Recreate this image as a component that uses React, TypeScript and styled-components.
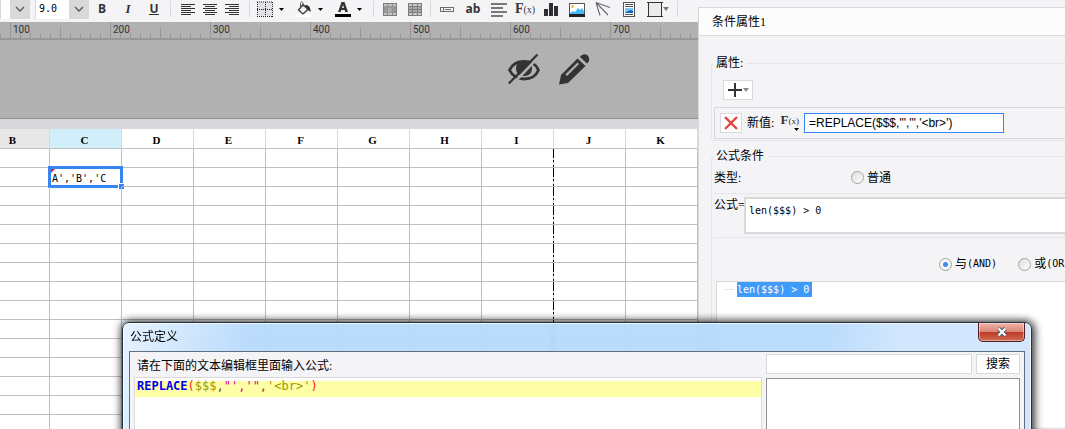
import React from "react";
import styled, { createGlobalStyle, css } from "styled-components";

const color = {
  chrome: "#f4f4f7",
  line: "#d9d9db",
  softLine: "#e6e6e9",
  canvas: "#b1b1b1",
  canvasLine: "#8f8f8f",
  cellLine: "#bfbfbf",
  accent: "#3685f2",
  ink: "#333334",
};

const serif = `"Liberation Serif", "Noto Sans CJK SC", serif`;
const mono = `"DejaVu Sans Mono", "Noto Sans CJK SC", monospace`;

const GlobalStyle = createGlobalStyle`
  *, *::before, *::after { box-sizing: border-box; }
  body {
    margin: 0;
    overflow: hidden;
    background: ${color.chrome};
    color: #000;
    font: 12px/16px ${serif};
  }
  button, input, select, textarea { font: inherit; color: inherit; margin: 0; padding: 0; border-radius: 0; outline: none; }
`;

const Page = styled.div`
  position: relative;
  display: grid;
  grid-template-columns: minmax(0, 1fr) 367px;
  height: 100vh;
  overflow: hidden;
`;

const Workspace = styled.main`
  display: flex;
  flex-direction: column;
  min-width: 0;
  overflow: hidden;
`;

/* Toolbar */

const Toolbar = styled.div`
  flex: none;
  display: flex;
  align-items: center;
  height: 22px;
  padding-bottom: 4px;
`;

const Combo = styled.label<{ $field: number }>`
  position: relative;
  flex: none;
  display: flex;
  height: 20px;
  background: linear-gradient(to right, #fff ${(p) => p.$field}px, ${color.line} ${(p) => p.$field}px);

  & + & { margin-left: 5px; }

  select {
    appearance: none;
    width: ${(p) => p.$field + 20}px;
    padding-left: 3px;
    border: 0;
    border-left: 1px solid ${color.line};
    background: transparent;
    font: 10px/18px ${mono};
  }
  svg {
    position: absolute;
    right: 5px;
    top: 7px;
    pointer-events: none;
  }
`;

const Tool = styled.button<{ $width?: number }>`
  flex: none;
  display: flex;
  align-items: center;
  justify-content: center;
  width: ${(p) => p.$width ?? 26}px;
  height: 18px;
  border: 0;
  background: transparent;
  color: ${color.ink};
`;

const Letter = styled.span<{ $kind: "bold" | "italic" | "underline" | "ab" }>`
  font: bold 12px/14px "Open Sans", sans-serif;
  ${(p) => p.$kind === "italic" && css`font: italic bold 13px/14px "Liberation Serif", serif;`}
  ${(p) => p.$kind === "underline" && css`border-bottom: 1px solid ${color.ink}; line-height: 11px;`}
`;

const Separator = styled.span`
  flex: none;
  width: 1px;
  height: 16px;
  margin: 0 3px;
  background: ${color.line};
`;

const Cluster = styled.div`
  flex: none;
  display: flex;
  padding: 0 3px;
`;

const Pair = styled.div`
  flex: none;
  display: flex;
  margin-right: 7px;
`;

const Fx = styled.span`
  font: bold 14px/16px "Liberation Serif", serif;
  color: ${color.ink};
  white-space: nowrap;
  small { font-size: 10px; font-weight: normal; }
`;

/* Ruler and canvas */

const Ruler = styled.div`
  flex: none;
  display: flex;
  height: 18px;
  padding-left: 10px;
  overflow: hidden;
  border-bottom: 2px solid #979797;
  background-color: ${color.canvas};
  background-image: linear-gradient(to right, #979797 1px, transparent 1px),
    linear-gradient(to right, #979797 1px, transparent 1px),
    linear-gradient(to right, #979797 1px, transparent 1px);
  background-size: 100px 16px, 100px 11px, 10px 5px;
  background-position: 10px 0, 60px 5px, 0 11px;
  background-repeat: repeat-x;
`;

const RulerMark = styled.span`
  flex: none;
  width: 100px;
  padding-left: 3px;
  font: 10px/16px Roboto, sans-serif;
  color: ${color.ink};
`;

const Canvas = styled.div`
  flex: none;
  display: flex;
  justify-content: flex-end;
  align-items: center;
  gap: 18px;
  height: 79px;
  padding: 0 108px 20px 0;
  border-bottom: 1px solid ${color.canvasLine};
  background: ${color.canvas};
`;

const CanvasAction = styled.button`
  display: flex;
  padding: 0;
  border: 0;
  background: transparent;
`;

/* Sheet */

const SheetArea = styled.div`
  flex: 1;
  min-height: 0;
  padding-top: 10px;
  overflow: hidden;
  background: linear-gradient(${color.line} 10px, #fff 10px);
`;

const Sheet = styled.table`
  table-layout: fixed;
  width: 698px;
  border-collapse: separate;
  border-spacing: 0;
`;

const Col = styled.col<{ $width: number }>`
  width: ${(p) => p.$width}px;
`;

const ColumnHead = styled.th<{ $state?: "dim" | "active" }>`
  height: 20px;
  padding: 3px 2px 0 0;
  border-right: 1px solid ${color.line};
  border-bottom: 1px solid ${color.cellLine};
  background: ${(p) => (p.$state === "active" ? "#d0effb" : p.$state === "dim" ? "#e8e8e8" : "#fff")};
  font: bold 11px/16px ${serif};
  ${(p) => p.$state === "dim" && css`padding-right: 24px;`}
`;

const Cell = styled.td<{ $pageBreak?: boolean }>`
  position: relative;
  height: 19px;
  padding: 4px 0 0 2px;
  border-right: 1px solid ${color.cellLine};
  border-bottom: 1px solid ${color.cellLine};
  font: 10px/14px ${mono};
  vertical-align: bottom;
  white-space: nowrap;
  ${(p) =>
    p.$pageBreak &&
    css`
      border-right: 0;
      background: linear-gradient(#000 0 9px, #ccc 9px 11px, #000 11px 13px, #ccc 13px 16px, #000 16px) right / 1px 100% no-repeat;
    `}
`;

const Selection = styled.span`
  position: absolute;
  inset: -2px;
  border: 3px solid ${color.accent};
  pointer-events: none;

  &::before {
    content: "";
    position: absolute;
    left: 0;
    top: 0;
    border: 2px solid transparent;
    border-left-color: #f0144c;
    border-top-color: #f0144c;
  }
  &::after {
    content: "";
    position: absolute;
    right: -4px;
    bottom: -4px;
    width: 6px;
    height: 6px;
    border: solid #fff;
    border-width: 1px 0 0 1px;
    background: ${color.accent};
  }
`;

/* Condition panel */

const Panel = styled.aside`
  display: flex;
  flex-direction: column;
  min-width: 0;
  margin-top: 7px;
  overflow: hidden;
  border: solid ${color.line};
  border-width: 1px 0 0 1px;
  background: ${color.chrome};
  white-space: nowrap;
`;

const PanelTitle = styled.h2`
  flex: none;
  margin: 0;
  padding: 6px 13px 5px;
  border-bottom: 1px solid ${color.line};
  background: #fcfcfd;
  font: 12px/16px ${serif};
`;

const PanelBody = styled.div`
  flex: 1;
  display: flex;
  flex-direction: column;
  gap: 7px;
  min-height: 0;
  padding: 19px 0 0 12px;
`;

const Group = styled.fieldset<{ $fill?: boolean }>`
  display: flex;
  flex-direction: column;
  flex: ${(p) => (p.$fill ? "1" : "none")};
  min-width: 0;
  margin: 0;
  padding: 0 0 1px 2px;
  border: 1px solid ${color.softLine};
  border-right: 0;
  border-radius: 4px 0 0 4px;

  legend { padding: 0 4px 0 2px; line-height: 16px; }
`;

const IconButton = styled.button<{ $width: number }>`
  flex: none;
  display: flex;
  align-items: center;
  justify-content: center;
  gap: 1px;
  width: ${(p) => p.$width}px;
  height: 20px;
  border: 1px solid ${color.line};
  background: #fff;
`;

const AddRow = styled.div`
  padding: 9px 0 7px 9px;
`;

const ValueRow = styled.div`
  display: flex;
  align-items: center;
  gap: 5px;
  height: 32px;
  padding-left: 5px;
  border: 1px solid ${color.line};
  border-right: 0;

  label { width: 30px; }
`;

const FxButton = styled.button`
  display: flex;
  flex-direction: column;
  align-items: flex-end;
  width: 17px;
  height: 20px;
  border: 0;
  background: transparent;

  span { font-size: 13px; line-height: 14px; }
  small { font-size: 9px; }
`;

const ValueInput = styled.input`
  width: 200px;
  height: 20px;
  padding: 0 4px;
  border: 1px solid ${color.accent};
  background: #fff;
  font: 12px/18px "Liberation Sans", sans-serif;
`;

const TypeRow = styled.div`
  display: flex;
  align-items: center;
  height: 30px;
  padding-bottom: 2px;
  border-bottom: 1px solid ${color.softLine};
`;

const RowLabel = styled.span`
  width: 137px;
`;

const RadioLabel = styled.label`
  display: flex;
  align-items: center;

  input {
    appearance: none;
    width: 13px;
    height: 13px;
    margin-right: 3px;
    border: 1px solid #a3a3a3;
    border-radius: 50%;
    background: linear-gradient(135deg, #dcdcdc, #fff);
  }
  input:checked {
    background: radial-gradient(circle, #3d8bf4 0 2px, #f4f4f6 3px);
  }
`;

const Operator = styled.span`
  font: 10px/16px ${mono};
`;

const FormulaRow = styled.div`
  display: flex;
  height: 44px;
  padding: 3px 0;
  border-bottom: 1px solid ${color.softLine};

  label { width: 30px; }
`;

const FormulaText = styled.textarea`
  flex: 1;
  resize: none;
  overflow: hidden;
  padding: 4px 3px;
  border: 2px solid ${color.line};
  border-right: 0;
  background: #fff;
  font: 10px/16px ${mono};
`;

const JoinRow = styled.div`
  display: flex;
  gap: 21px;
  padding: 18px 0 9px 225px;
`;

const ConditionList = styled.ul`
  flex: 1;
  margin: 0 0 0 2px;
  padding: 0 0 0 7px;
  border: solid ${color.line};
  border-width: 1px 0 0 1px;
  background: #fff;
  list-style: none;
`;

const Condition = styled.li`
  display: flex;
  align-items: center;

  &::before {
    content: "";
    width: 10px;
    height: 1px;
    margin-right: 3px;
    background: ${color.softLine};
  }
  span {
    padding-right: 3px;
    background: #3f9bfa;
    color: #fff;
    font: 10px/15px ${mono};
  }
`;

/* Formula dialog */

const Dialog = styled.section`
  position: absolute;
  left: 122px;
  right: 33px;
  top: 322px;
  bottom: -20px;
  display: flex;
  flex-direction: column;
  padding: 0 6px;
  border: 1px solid #26323d;
  border-radius: 7px;
  background: linear-gradient(100deg, rgba(228, 241, 255, 0.95), rgba(176, 214, 252, 0.86) 14%, rgba(176, 214, 252, 0.86) 76%, rgba(208, 230, 254, 0.96) 84%);
  box-shadow: inset 0 0 0 1px rgba(255, 255, 255, 0.7), 0 0 9px 1px rgba(0, 0, 0, 0.7), 3px 0 10px rgba(0, 0, 0, 0.4);
  backdrop-filter: blur(2px);
`;

const TitleBar = styled.header`
  display: flex;
  justify-content: space-between;
  align-items: flex-start;
  height: 28px;

  h2 {
    margin: 0;
    padding: 5px 1px;
    font: 12px/18px ${serif};
  }
`;

const CloseButton = styled.button`
  display: flex;
  align-items: center;
  justify-content: center;
  width: 47px;
  height: 19px;
  border: 1px solid #4f1d22;
  border-top: 0;
  border-radius: 0 0 5px 5px;
  background: linear-gradient(#efb3a6, #dc8677 48%, #bd3a24 50%, #cf6a50);
  box-shadow: inset 0 0 0 1px rgba(255, 255, 255, 0.45);
`;

const DialogBody = styled.div`
  flex: 1;
  display: flex;
  gap: 4px;
  padding: 2px 4px 0;
  border: 1px solid #5f6f82;
  background: ${color.chrome};
`;

const EditorColumn = styled.div`
  flex: 1;
  display: flex;
  flex-direction: column;
  min-width: 0;
`;

const Prompt = styled.span`
  padding: 4px 3px 3px;
`;

const Editor = styled.div`
  flex: 1;
  padding-top: 3px;
  border: 1px solid ${color.line};
  background: #fff;
`;

const CodeLine = styled.div`
  height: 16px;
  padding-left: 2px;
  background: #ffffa8;
  font: 12px/10px ${mono};
  outline: none;
  white-space: pre;
`;

const Token = styled.span<{ $kind: "name" | "paren" | "value" | "comma" | "string" }>`
  color: ${(p) =>
    ({ name: "#0000f0", paren: "#ff2020", value: "#999900", comma: "#804040", string: "#dc009c" })[p.$kind]};
  ${(p) => p.$kind === "name" && css`font-weight: bold;`}
`;

const SearchColumn = styled.div`
  flex: none;
  display: flex;
  flex-direction: column;
  gap: 4px;
  width: 254px;
`;

const SearchRow = styled.div`
  display: flex;
  gap: 4px;
`;

const SearchInput = styled.input`
  flex: 1;
  min-width: 0;
  height: 20px;
  border: 1px solid ${color.line};
  background: #fff;
`;

const SearchButton = styled.button`
  width: 44px;
  height: 20px;
  border: 1px solid ${color.line};
  background: #fff;
`;

const Results = styled.div`
  flex: 1;
  border: 1px solid #929294;
  background: #fff;
`;

/* Drawings */

const Chevron = () => (
  <svg width="10" height="7" viewBox="0 0 10 7" fill="none" stroke="#555" strokeWidth="1.3">
    <path d="M1 1l4 4 4-4" />
  </svg>
);

const Caret = ({ fill = "#000", size = 5 }: { fill?: string; size?: number }) => (
  <svg width={size} height={size === 5 ? 3 : 4} viewBox="0 0 5 3" preserveAspectRatio="none">
    <path d="M0 0h5L2.500 3z" fill={fill} />
  </svg>
);

const Icon = ({ children, w = 16 }: { children: React.ReactNode; w?: number }) => (
  <svg width={w} height="16" viewBox={`0 0 ${w} 16`} fill="none">
    {children}
  </svg>
);

const alignInset = { left: 0, center: 2, right: 4 };

const AlignIcon = ({ kind }: { kind: keyof typeof alignInset }) => (
  <Icon w={14}>
    <g fill={color.ink}>
      {[3, 5, 7, 9, 11, 13].map((y, i) => (
        <rect key={y} x={i % 2 ? alignInset[kind] : 0} y={y} width={i % 2 ? 10 : 14} height="1" />
      ))}
    </g>
  </Icon>
);

const BorderIcon = () => (
  <Icon>
    <rect x="1" y="1" width="14" height="14" fill="#e2e2e4" />
    <path d="M.5 1v15M8.500 1v15M15.500 1v15M0 1h16M0 8.500h16M0 15.500h16" stroke="#222" strokeDasharray="1 1" />
  </Icon>
);

const BucketIcon = () => (
  <Icon w={18}>
    <rect x="0" y="13" width="16" height="3" fill="#fff" />
    <path d="M8 3.500l5 5-5 4.500L3.500 9z" fill="#f0f0f0" stroke={color.ink} strokeWidth="1.300" />
    <path d="M5.500 7V2.500C5.500.5 8 .5 8 2.500V6" stroke="#555" />
    <path d="M10 4c3-.5 6 2 5.500 7l-2.500-2z" fill={color.ink} />
  </Icon>
);

const FontColorIcon = () => (
  <Icon>
    <path d="M3 11L6.500 1h3L13 11h-2.700l-.6-2H6.300l-.6 2zM7 7h2L8 3.700z" fill={color.ink} fillRule="evenodd" />
    <rect y="13" width="16" height="3" fill="#000" />
  </Icon>
);

const MergeIcon = () => (
  <Icon w={14}>
    <rect x=".5" y="2.500" width="13" height="12" fill="#c4c4c4" stroke="#7d7d7d" />
    <rect x="1" y="5" width="12" height="7" fill="#979797" />
    <path d="M4.500 3v2M9.500 3v2M4.500 12v2M9.500 12v2" stroke="#8a8a8a" />
    <path d="M5 7.500h3v3H5.500V9H8" stroke="#b4b4b4" />
  </Icon>
);

const SplitIcon = () => (
  <Icon w={14}>
    <rect x=".5" y="2.500" width="13" height="12" fill="#c9c9c9" stroke="#7d7d7d" />
    <rect x="1" y="6" width="12" height="5" fill="#a8a8a8" />
    <path d="M4.500 2v12M9.500 2v12M0 5.500h14M0 8.500h14M0 11.500h14" stroke="#7d7d7d" />
  </Icon>
);

const FieldIcon = () => (
  <Icon w={14}>
    <rect x=".5" y="6.500" width="13" height="4" stroke="#6c6c6c" />
    <path d="M3.500 7v3M5 8.500h6" stroke="#6c6c6c" />
  </Icon>
);

const LinesIcon = () => (
  <Icon>
    <path d="M0 3h16M0 7h12M0 11h16M0 15h12" stroke="#505052" strokeWidth="1.500" />
  </Icon>
);

const ChartIcon = () => (
  <Icon w={14}>
    <path d="M0 8h4v7H0zM5 2h4v13H5zM10 5h4v10h-4z" fill="#2f2f31" />
  </Icon>
);

const ImageIcon = () => (
  <Icon>
    <rect x=".5" y="2.500" width="15" height="13" fill="#fff" stroke="#555" />
    <circle cx="3.500" cy="5.500" r="1.500" fill="#f7bd48" />
    <path d="M1 12l3-2 2 1 3-4 2 2 2-2 2 3v3H1z" fill="#44b9f4" />
    <path d="M0 14.500h16" stroke="#222" strokeWidth="3" />
  </Icon>
);

const SlashIcon = () => (
  <Icon>
    <path d="M1 1.500l14 5M1 1.500L13 14M1 1.500l4 13" stroke="#68686a" strokeWidth="1.100" />
  </Icon>
);

const ReportIcon = () => (
  <Icon w={12}>
    <rect x=".5" y="1.500" width="11" height="14" fill="#fff" stroke="#555" />
    <path d="M2 3.500h8M2 5.500h8M2 13.500h8" stroke="#555" />
    <rect x="2" y="7" width="8" height="5" fill="#7fc4f4" />
    <path d="M2 12l3-2 3-1 2 1v2z" fill="#1464b4" />
  </Icon>
);

const FrameIcon = () => (
  <Icon>
    <rect x="1.500" y="1.500" width="13" height="14" fill="#ebebee" stroke="#333" />
    <path d="M0 1.500h16M0 15.500h16" stroke="#333" />
  </Icon>
);

const EyeOffIcon = () => (
  <svg width="33" height="31" viewBox="0 0 33 31" fill="none">
    <path d="M1.500 16C7 4.500 26 4.500 30.500 16 26 28 7 28 1.500 16z" stroke={color.ink} strokeWidth="2.800" />
    <path d="M8 14.500c0-4.500 3-7 8-7s8 2.500 8 7-3 7.500-8 7.500-8-3-8-7.500z" fill={color.ink} />
    <path d="M32.500 1L4 31" stroke={color.canvas} strokeWidth="2.600" />
    <path d="M29.500 .5L.8 29.500" stroke={color.ink} strokeWidth="2.200" />
  </svg>
);

const PencilIcon = () => (
  <svg width="31" height="31" viewBox="0 0 31 31" fill={color.ink}>
    <path d="M21 3c2.500-4 8-3.500 9 1 .8 2.500-.5 4.500-2 5.500z" />
    <path d="M18.500 4.500l8 7.500L9 29 0 30.500 2 21z" />
    <path d="M18.500 8.500l1.500 1.500L8 22l-1.700-1.400z" fill={color.canvas} />
  </svg>
);

const FxGlyph = () => (
  <Fx>
    F<small>(x)</small>
  </Fx>
);

const columns = ["B", "C", "D", "E", "F", "G", "H", "I", "J", "K"];
const rows = Array.from({ length: 15 }, (_, i) => i + 1);
const marks = [100, 200, 300, 400, 500, 600, 700];

export default function App() {
  return (
    <Page>
      <GlobalStyle />
      <Workspace>
        <Toolbar role="toolbar" aria-label="Format">
          <Combo $field={10}>
            <select aria-label="Font family" />
            <Chevron />
          </Combo>
          <Combo $field={34}>
            <select aria-label="Font size" defaultValue="9.0">
              <option>9.0</option>
            </select>
            <Chevron />
          </Combo>
          <Tool aria-label="Bold"><Letter $kind="bold">B</Letter></Tool>
          <Tool aria-label="Italic"><Letter $kind="italic">I</Letter></Tool>
          <Tool aria-label="Underline"><Letter $kind="underline">U</Letter></Tool>
          <Separator />
          <Cluster>
            <Tool $width={22} aria-label="Align left"><AlignIcon kind="left" /></Tool>
            <Tool $width={22} aria-label="Align center"><AlignIcon kind="center" /></Tool>
            <Tool $width={22} aria-label="Align right"><AlignIcon kind="right" /></Tool>
          </Cluster>
          <Separator />
          <Pair>
            <Tool $width={24} aria-label="Borders"><BorderIcon /></Tool>
            <Tool $width={8} aria-label="Border options"><Caret /></Tool>
          </Pair>
          <Pair>
            <Tool $width={24} aria-label="Fill"><BucketIcon /></Tool>
            <Tool $width={8} aria-label="Fill options"><Caret /></Tool>
          </Pair>
          <Pair>
            <Tool $width={24} aria-label="Font color"><FontColorIcon /></Tool>
            <Tool $width={8} aria-label="Font color options"><Caret /></Tool>
          </Pair>
          <Separator />
          <Tool $width={25} aria-label="Merge"><MergeIcon /></Tool>
          <Tool $width={25} aria-label="Split"><SplitIcon /></Tool>
          <Separator />
          <Tool aria-label="Field"><FieldIcon /></Tool>
          <Tool aria-label="Text"><Letter $kind="ab">ab</Letter></Tool>
          <Tool aria-label="Rich text"><LinesIcon /></Tool>
          <Tool aria-label="Formula"><FxGlyph /></Tool>
          <Tool aria-label="Chart"><ChartIcon /></Tool>
          <Tool aria-label="Image"><ImageIcon /></Tool>
          <Tool aria-label="Slash header"><SlashIcon /></Tool>
          <Tool aria-label="Subreport"><ReportIcon /></Tool>
          <Tool $width={32} aria-label="Float">
            <FrameIcon />
            <Caret fill="#777" size={6} />
          </Tool>
          <Separator />
        </Toolbar>
        <Ruler>
          {marks.map((m) => (
            <RulerMark key={m}>{m}</RulerMark>
          ))}
        </Ruler>
        <Canvas>
          <CanvasAction aria-label="Hide"><EyeOffIcon /></CanvasAction>
          <CanvasAction aria-label="Edit"><PencilIcon /></CanvasAction>
        </Canvas>
        <SheetArea>
          <Sheet>
            <colgroup>
              {columns.map((c) => (
                <Col key={c} $width={c === "B" ? 50 : 72} />
              ))}
            </colgroup>
            <thead>
              <tr>
                {columns.map((c) => (
                  <ColumnHead key={c} $state={c === "B" ? "dim" : c === "C" ? "active" : undefined}>
                    {c}
                  </ColumnHead>
                ))}
              </tr>
            </thead>
            <tbody>
              {rows.map((r) => (
                <tr key={r}>
                  {columns.map((c) => (
                    <Cell key={c} $pageBreak={c === "I"}>
                      {r === 2 && c === "C" && (
                        <>
                          A','B','C
                          <Selection />
                        </>
                      )}
                    </Cell>
                  ))}
                </tr>
              ))}
            </tbody>
          </Sheet>
        </SheetArea>
      </Workspace>

      <Panel>
        <PanelTitle>条件属性1</PanelTitle>
        <PanelBody>
          <Group>
            <legend>属性:</legend>
            <AddRow>
              <IconButton $width={30} aria-label="Add">
                <svg width="14" height="14" viewBox="0 0 14 14" stroke={color.ink} strokeWidth="2">
                  <path d="M7 0v14M0 7h14" />
                </svg>
                <Caret fill="#888" size={6} />
              </IconButton>
            </AddRow>
            <ValueRow>
              <IconButton $width={22} aria-label="Delete">
                <svg width="14" height="14" viewBox="0 0 14 14" stroke="#e8403c" strokeWidth="2.400">
                  <path d="M1 1l12 12M13 1L1 13" />
                </svg>
              </IconButton>
              <label htmlFor="new-value">新值:</label>
              <FxButton aria-label="Value type">
                <FxGlyph />
                <Caret />
              </FxButton>
              <ValueInput id="new-value" defaultValue={`=REPLACE($$$,"','",'<br>')`} />
            </ValueRow>
          </Group>
          <Group $fill>
            <legend>公式条件</legend>
            <TypeRow>
              <RowLabel>类型:</RowLabel>
              <RadioLabel>
                <input type="radio" name="type" />
                普通
              </RadioLabel>
            </TypeRow>
            <FormulaRow>
              <label htmlFor="condition">公式=</label>
              <FormulaText id="condition" defaultValue="len($$$) > 0" />
            </FormulaRow>
            <JoinRow>
              <RadioLabel>
                <input type="radio" name="join" defaultChecked />
                与<Operator>(AND)</Operator>
              </RadioLabel>
              <RadioLabel>
                <input type="radio" name="join" />
                或<Operator>(OR)</Operator>
              </RadioLabel>
            </JoinRow>
            <ConditionList>
              <Condition>
                <span>len($$$) &gt; 0</span>
              </Condition>
            </ConditionList>
          </Group>
        </PanelBody>
      </Panel>

      <Dialog role="dialog" aria-labelledby="dialog-title">
        <TitleBar>
          <h2 id="dialog-title">公式定义</h2>
          <CloseButton aria-label="Close">
            <svg width="12" height="10" viewBox="0 0 12 10" fill="none">
              <path d="M2.500 1.500l7 7M9.500 1.500l-7 7" stroke="#4c5563" strokeWidth="4.200" />
              <path d="M2.500 1.500l7 7M9.500 1.500l-7 7" stroke="#f4f4f4" strokeWidth="2.400" />
            </svg>
          </CloseButton>
        </TitleBar>
        <DialogBody>
          <EditorColumn>
            <Prompt id="prompt">请在下面的文本编辑框里面输入公式:</Prompt>
            <Editor>
              <CodeLine role="textbox" aria-labelledby="prompt" contentEditable suppressContentEditableWarning>
                <Token $kind="name">REPLACE</Token>
                <Token $kind="paren">(</Token>
                <Token $kind="value">$$$</Token>
                <Token $kind="comma">,</Token>
                <Token $kind="string">"','"</Token>
                <Token $kind="comma">,</Token>
                <Token $kind="value">'&lt;br&gt;'</Token>
                <Token $kind="paren">)</Token>
              </CodeLine>
            </Editor>
          </EditorColumn>
          <SearchColumn>
            <SearchRow>
              <SearchInput aria-label="搜索" />
              <SearchButton>搜索</SearchButton>
            </SearchRow>
            <Results />
          </SearchColumn>
        </DialogBody>
      </Dialog>
    </Page>
  );
}
